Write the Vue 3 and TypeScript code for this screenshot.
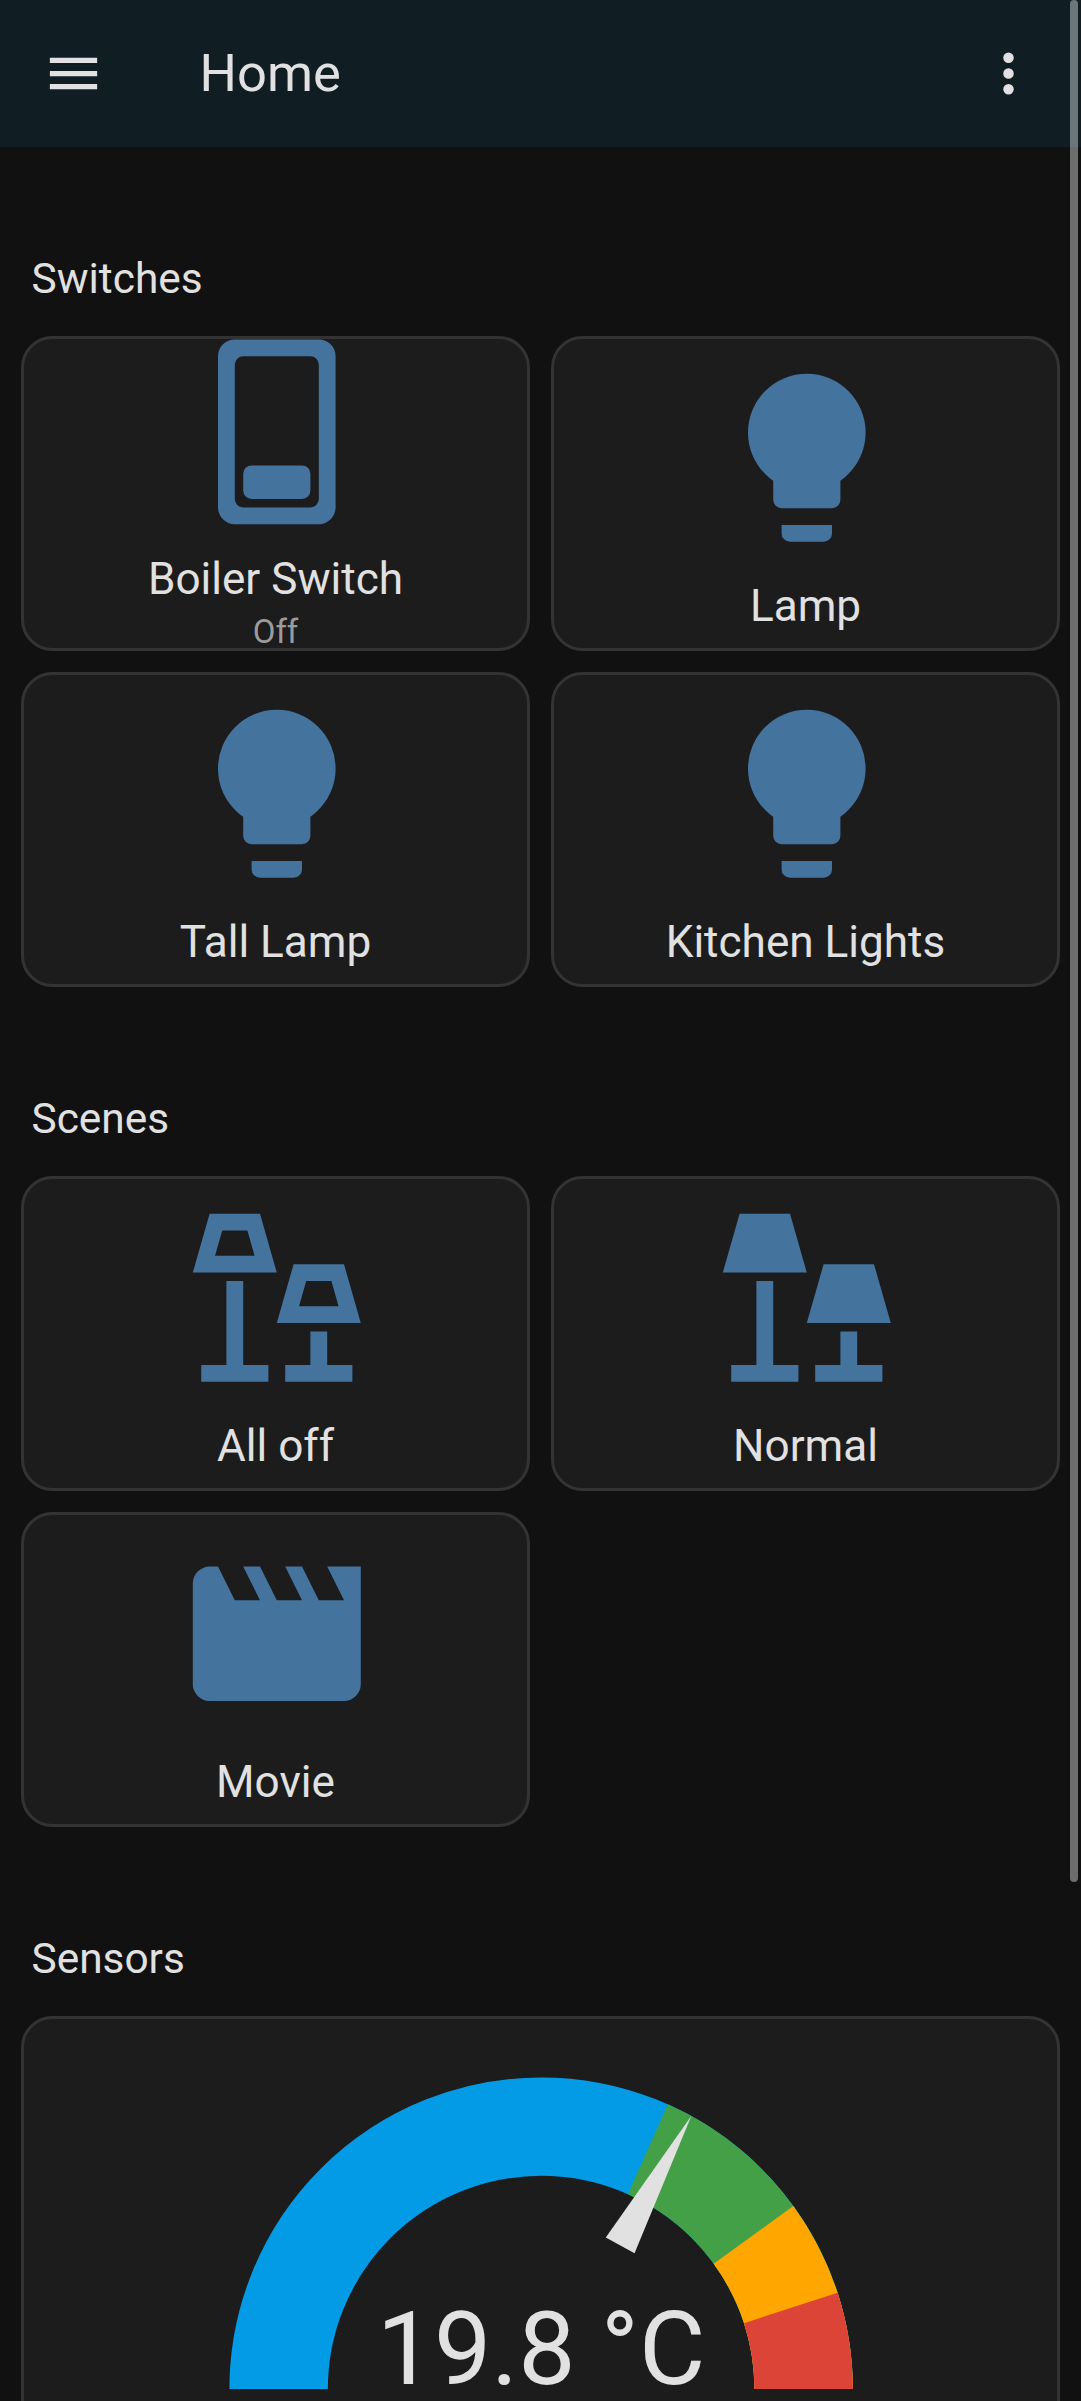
<script setup lang="ts">
interface Tile {
  name: string
  icon: string
  state?: string
}

interface Section {
  title: string
  tiles: Tile[]
}

const icons: Record<string, string> = {
  menu: 'M3,6H21V8H3V6M3,11H21V13H3V11M3,16H21V18H3V16Z',
  dots: 'M12,16A2,2 0 0,1 14,18A2,2 0 0,1 12,20A2,2 0 0,1 10,18A2,2 0 0,1 12,16M12,10A2,2 0 0,1 14,12A2,2 0 0,1 12,14A2,2 0 0,1 10,12A2,2 0 0,1 12,10M12,4A2,2 0 0,1 14,6A2,2 0 0,1 12,8A2,2 0 0,1 10,6A2,2 0 0,1 12,4Z',
  switchOff:
    'M7,1A2,2 0 0,0 5,3V21A2,2 0 0,0 7,23H17A2,2 0 0,0 19,21V3A2,2 0 0,0 17,1H7M8,3H16A1,1 0 0,1 17,4V20A1,1 0 0,1 16,21H8A1,1 0 0,1 7,20V4A1,1 0 0,1 8,3M9,16A1,1 0 0,0 8,17V19A1,1 0 0,0 9,20H15A1,1 0 0,0 16,19V17A1,1 0 0,0 15,16H9Z',
  bulb: 'M12,2A7,7 0 0,0 5,9C5,11.38 6.19,13.47 8,14.74V17A1,1 0 0,0 9,18H15A1,1 0 0,0 16,17V14.74C17.81,13.47 19,11.38 19,9A7,7 0 0,0 12,2M9,21A1,1 0 0,0 10,22H14A1,1 0 0,0 15,21V20H9V21Z',
  lampsOutline:
    'M4,2H10L12,9H2L4,2M5.5,4L4.65,7H9.35L8.5,4H5.5M6,10H8V20H11V22H3V20H6V10M14,8H20L22,15H12L14,8M15.5,10L14.65,13H19.35L18.5,10H15.5M16,16H18V20H21V22H13V20H16V16Z',
  lamps: 'M4,2H10L12,9H2L4,2M6,10H8V20H11V22H3V20H6V10M14,8H20L22,15H12L14,8M16,16H18V20H21V22H13V20H16V16Z',
  movie:
    'M18,4L20,8H17L15,4H13L15,8H12L10,4H8L10,8H7L5,4H4A2,2 0 0,0 2,6V18A2,2 0 0,0 4,20H20A2,2 0 0,0 22,18V4H18Z',
}

const sections: Section[] = [
  {
    title: 'Switches',
    tiles: [
      { name: 'Boiler Switch', icon: 'switchOff', state: 'Off' },
      { name: 'Lamp', icon: 'bulb' },
      { name: 'Tall Lamp', icon: 'bulb' },
      { name: 'Kitchen Lights', icon: 'bulb' },
    ],
  },
  {
    title: 'Scenes',
    tiles: [
      { name: 'All off', icon: 'lampsOutline' },
      { name: 'Normal', icon: 'lamps' },
      { name: 'Movie', icon: 'movie' },
    ],
  },
]

const gaugeMax = 30
const temperature = 19.8
const levels = [
  { from: 0, color: '#039be5' },
  { from: 19, color: '#43a047' },
  { from: 24, color: '#ffa600' },
  { from: 27, color: '#db4437' },
]

const toAngle = (value: number): number => (value / gaugeMax) * 180

// Every level runs to the right end; later ones are painted on top.
const arc = (from: number): string => {
  const a = (toAngle(from) * Math.PI) / 180
  return `M ${-40 * Math.cos(a)} ${-40 * Math.sin(a)} A 40 40 0 0 1 40 0`
}
</script>

<template>
  <div class="app">
    <header class="toolbar">
      <button class="icon-button" aria-label="Menu">
        <svg viewBox="0 0 24 24"><path :d="icons.menu" /></svg>
      </button>
      <div class="title">Home</div>
      <button class="icon-button" aria-label="More">
        <svg viewBox="0 0 24 24"><path :d="icons.dots" /></svg>
      </button>
    </header>

    <main class="view">
      <section v-for="section in sections" :key="section.title">
        <h2>{{ section.title }}</h2>
        <div class="grid">
          <div
            v-for="tile in section.tiles"
            :key="tile.name"
            class="card tile"
            :class="{ 'with-state': tile.state }"
          >
            <svg viewBox="0 0 24 24"><path fill-rule="evenodd" :d="icons[tile.icon]" /></svg>
            <span class="name">{{ tile.name }}</span>
            <span v-if="tile.state" class="state">{{ tile.state }}</span>
          </div>
        </div>
      </section>

      <section>
        <h2>Sensors</h2>
        <div class="card gauge-card">
          <svg class="gauge" viewBox="-50 -50 100 50">
            <path
              v-for="level in levels"
              :key="level.from"
              class="level"
              :d="arc(level.from)"
              :stroke="level.color"
            />
            <path
              class="needle"
              d="M -25 -2.5 L -47.5 0 L -25 2.5 z"
              :transform="`rotate(${toAngle(temperature)})`"
            />
          </svg>
          <div class="value">{{ temperature }} °C</div>
        </div>
      </section>
    </main>

    <div class="scrollbar"></div>
  </div>
</template>

<style>
body {
  background: #111111;
  overflow: hidden;
}
</style>

<style scoped>
.app {
  position: relative;
  box-sizing: border-box;
  width: 1081px;
  height: 2401px;
  overflow: hidden;
  background: #111111;
  color: #e1e1e1;
  font-family: Roboto, 'Noto Sans', sans-serif;
}

.toolbar {
  display: flex;
  align-items: center;
  box-sizing: border-box;
  height: 147px;
  padding: 0 10px 0 10.5px;
  background: #101e24;
}

.icon-button {
  display: flex;
  align-items: center;
  justify-content: center;
  width: 126px;
  height: 126px;
  padding: 0;
  border: 0;
  background: none;
  color: inherit;
}

.icon-button svg {
  width: 63px;
  height: 63px;
  fill: currentColor;
}

.title {
  flex: 1;
  margin-left: 63px;
  font-size: 52.5px;
  line-height: 147px;
}

.view {
  padding: 0 21px;
}

h2 {
  box-sizing: border-box;
  height: 189px;
  margin: 0;
  padding: 106px 0 0 10.5px;
  font-size: 42.4px;
  font-weight: 400;
  line-height: 52px;
}

.grid {
  display: grid;
  grid-template-columns: 1fr 1fr;
  gap: 21px;
}

.card {
  box-sizing: border-box;
  border: 3px solid #333333;
  border-radius: 31.5px;
  background: #1c1c1c;
}

.tile {
  display: flex;
  flex-direction: column;
  align-items: center;
  justify-content: center;
  height: 315px;
  overflow: hidden;
}

.tile svg {
  flex: none;
  width: 201.6px;
  height: 201.6px;
  margin-left: 3px;
  fill: #44739e;
}

.name {
  margin: 22.8px 0 -0.4px;
  font-size: 44.1px;
  line-height: 50px;
}

.with-state .name {
  margin: 21.4px 0 1px;
}

.state {
  margin: 4px 0 3px;
  color: #9b9b9b;
  font-size: 33px;
  line-height: 45px;
}

.gauge-card {
  display: flex;
  flex-direction: column;
  align-items: center;
  padding: 42px;
  height: 500px;
}

.gauge {
  flex: none;
  width: 656.25px;
  height: 328.125px;
  margin-left: 1px;
}

.level {
  fill: none;
  stroke-width: 15;
}

.needle {
  fill: #e1e1e1;
}

/* The reading sits inside the half ring, on its base line. */
.value {
  margin: -88px 0 0 1px;
  font-size: 102px;
  line-height: 96px;
}

.scrollbar {
  position: absolute;
  top: 0;
  right: 3px;
  width: 8px;
  height: 1882px;
  border-radius: 4px;
  background: rgba(255, 255, 255, 0.39);
}
</style>
